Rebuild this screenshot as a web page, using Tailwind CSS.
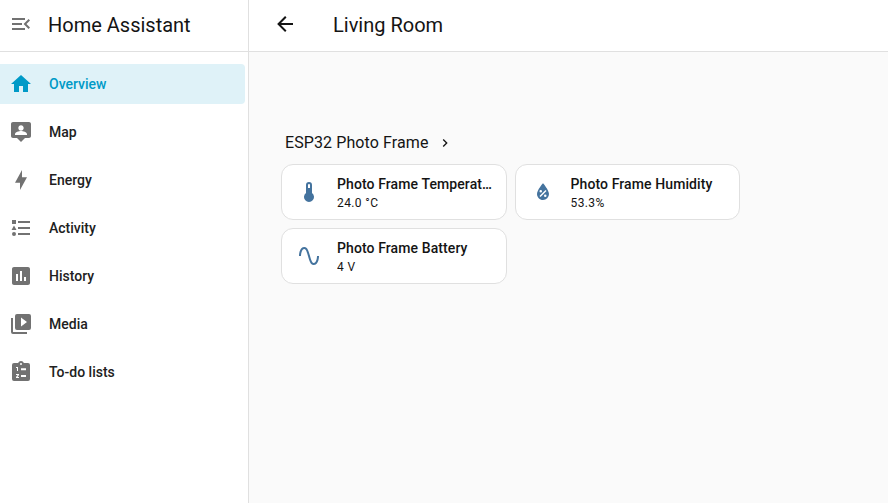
<!DOCTYPE html>
<html lang="en">

<head>
  <meta charset="UTF-8">
  <meta name="viewport" content="width=device-width, initial-scale=1.0">
  <script src="https://cdn.jsdelivr.net/npm/@tailwindcss/browser@4"></script>
  <title>Living Room</title>
</head>

<body class="font-['Roboto',sans-serif] bg-white text-[#141414]">
  <div class="flex h-[503px] w-[888px] overflow-hidden">

    <!-- Sidebar -->
    <aside class="w-[249px] shrink-0 border-r border-[#e0e0e0] bg-white">
      <div class="flex h-[52px] items-center border-b border-[#e0e0e0] pb-[3px]">
        <svg class="ml-[9px] h-6 w-6 fill-[#727272]" viewBox="0 0 24 24"><path d="M21,15.61L19.59,17L14.58,12L19.59,7L21,8.39L17.44,12L21,15.61M3,6H16V8H3V6M3,13V11H13V13H3M3,18V16H16V18H3Z" /></svg>
        <span class="ml-[15px] mt-0.5 text-xl">Home Assistant</span>
      </div>
      <nav class="flex flex-col pt-3 text-sm font-medium text-[#212121]">
        <a class="flex h-10 w-[245px] items-center rounded-r bg-[#dff2f8] text-[#009ac7]">
          <svg class="ml-[9px] h-6 w-6 fill-[#009ac7]" viewBox="0 0 24 24"><path d="M10,20V14H14V20H19V12H22L12,3L2,12H5V20H10Z" /></svg>
          <span class="ml-4">Overview</span>
        </a>
        <a class="mt-2 flex h-10 items-center">
          <svg class="ml-[9px] h-6 w-6 fill-[#727272]" viewBox="0 0 24 24"><path d="M20 2H4C2.9 2 2 2.9 2 4V16C2 17.1 2.9 18 4 18H8L12 22L16 18H20C21.1 18 22 17.1 22 16V4C22 2.9 21.1 2 20 2M12 5.3C13.5 5.3 14.7 6.5 14.7 8S13.5 10.7 12 10.7 9.3 9.5 9.3 8 10.5 5.3 12 5.3M18 15H6V14.1C6 12.1 10 11 12 11S18 12.1 18 14.1V15Z" /></svg>
          <span class="ml-4">Map</span>
        </a>
        <a class="mt-2 flex h-10 items-center">
          <svg class="ml-[9px] h-6 w-6 fill-[#727272]" viewBox="0 0 24 24"><path d="M11 14.8H6L13 2V9.2H18L11 22V14.8Z" /></svg>
          <span class="ml-4">Energy</span>
        </a>
        <a class="mt-2 flex h-10 items-center">
          <svg class="ml-[9px] h-6 w-6 fill-[#727272]" viewBox="0 0 24 24"><path d="M5,9.5L7.5,14H2.5L5,9.5M3,4H7V8H3V4M5,20A2,2 0 0,0 7,18A2,2 0 0,0 5,16A2,2 0 0,0 3,18A2,2 0 0,0 5,20M9,5V7H21V5H9M9,19H21V17H9V19M9,13H21V11H9V13Z" /></svg>
          <span class="ml-4">Activity</span>
        </a>
        <a class="mt-2 flex h-10 items-center">
          <svg class="ml-[9px] h-6 w-6 fill-[#727272]" viewBox="0 0 24 24"><path d="M19 3H5C3.9 3 3 3.9 3 5V19C3 20.1 3.9 21 5 21H19C20.1 21 21 20.1 21 19V5C21 3.9 20.1 3 19 3M9 17H7V10H9V17M13 17H11V7H13V17M17 17H15V13H17V17Z" /></svg>
          <span class="ml-4">History</span>
        </a>
        <a class="mt-2 flex h-10 items-center">
          <svg class="ml-[9px] h-6 w-6 fill-[#727272]" viewBox="0 0 24 24"><path d="M4,6H2V20A2,2 0 0,0 4,22H18V20H4V6M20,2H8A2,2 0 0,0 6,4V16A2,2 0 0,0 8,18H20A2,2 0 0,0 22,16V4A2,2 0 0,0 20,2M12,14.5V5.5L18,10L12,14.5Z" /></svg>
          <span class="ml-4">Media</span>
        </a>
        <a class="mt-2 flex h-10 items-center">
          <svg class="ml-[9px] h-6 w-6 fill-[#727272]" viewBox="0 0 24 24"><path fill-rule="evenodd" d="M19,3H14.82C14.4,1.84 13.3,1 12,1C10.7,1 9.6,1.84 9.18,3H5A2,2 0 0,0 3,5V19A2,2 0 0,0 5,21H19A2,2 0 0,0 21,19V5A2,2 0 0,0 19,3M12,3A1,1 0 0,1 13,4A1,1 0 0,1 12,5A1,1 0 0,1 11,4A1,1 0 0,1 12,3M7,7H9V11H8V8H7V7M7,14H10V15L8.5,17H10V18H7V17L8.7,15H7V14M12,8.3H17V10.3H12V8.3M12,15H17V17H12V15Z" /></svg>
          <span class="ml-4">To-do lists</span>
        </a>
      </nav>
    </aside>

    <!-- Main -->
    <main class="flex min-w-0 flex-1 flex-col bg-[#fafafa]">
      <header class="flex h-[52px] shrink-0 items-center border-b border-[#e0e0e0] bg-white pb-[3px]">
        <svg class="ml-6 h-6 w-6 fill-[#141414]" viewBox="0 0 24 24"><path d="M20,11V13H8L13.5,18.5L12.08,19.92L4.16,12L12.08,4.08L13.5,5.5L8,11H20Z" /></svg>
        <h1 class="ml-[36px] mt-0.5 text-xl font-normal">Living Room</h1>
      </header>

      <section class="w-[491px] pl-8 pt-[79px]">
        <div class="flex h-6 items-center pl-1">
          <span class="text-base tracking-[0.1px]">ESP32 Photo Frame</span>
          <svg class="ml-2 h-4 w-4 fill-[#141414]" viewBox="0 0 24 24"><path d="M8.59,16.58L13.17,12L8.59,7.41L10,6L16,12L10,18L8.59,16.58Z" /></svg>
        </div>
        <div class="mt-[9px] grid grid-cols-2 gap-2">
          <div class="flex h-14 min-w-0 items-center gap-4 rounded-xl border border-[#e0e0e0] bg-white pl-[15px] pr-3">
            <svg class="h-6 w-6 shrink-0 fill-[#44739e]" viewBox="0 0 24 24"><path d="M15 13V5A3 3 0 0 0 9 5V13A5 5 0 1 0 15 13M12 4A1 1 0 0 1 13 5V8H11V5A1 1 0 0 1 12 4Z" /></svg>
            <div class="min-w-0 pt-px">
              <div class="truncate text-sm font-medium leading-5 tracking-[0.1px]">Photo Frame Temperature</div>
              <div class="mt-px truncate text-xs leading-4 tracking-[0.4px]">24.0 °C</div>
            </div>
          </div>
          <div class="flex h-14 min-w-0 items-center gap-4 rounded-xl border border-[#e0e0e0] bg-white pl-[15px] pr-3">
            <svg class="h-6 w-6 shrink-0 fill-[#44739e]" viewBox="0 0 24 24"><path d="M12,3.25C12,3.25 6,10 6,14C6,17.32 8.69,20 12,20A6,6 0 0,0 18,14C18,10 12,3.25 12,3.25M14.47,9.97L15.53,11.03L9.53,17.03L8.47,15.97M9.75,10A1.25,1.25 0 0,1 11,11.25A1.25,1.25 0 0,1 9.75,12.5A1.25,1.25 0 0,1 8.5,11.25A1.25,1.25 0 0,1 9.75,10M14.25,14.5A1.25,1.25 0 0,1 15.5,15.75A1.25,1.25 0 0,1 14.25,17A1.25,1.25 0 0,1 13,15.75A1.25,1.25 0 0,1 14.25,14.5Z" /></svg>
            <div class="min-w-0 pt-px">
              <div class="truncate text-sm font-medium leading-5 tracking-[0.1px]">Photo Frame Humidity</div>
              <div class="mt-px truncate text-xs leading-4 tracking-[0.4px]">53.3%</div>
            </div>
          </div>
          <div class="flex h-14 min-w-0 items-center gap-4 rounded-xl border border-[#e0e0e0] bg-white pl-[15px] pr-3">
            <svg class="h-6 w-6 shrink-0 fill-[#44739e]" viewBox="0 0 24 24"><path d="M16.5,21C13.5,21 12.31,16.76 11.05,12.28C10.14,9.04 9,5 7.5,5C4.11,5 4,11.93 4,12H2C2,11.63 2.06,3 7.5,3C10.5,3 11.71,7.25 12.97,11.74C13.86,14.96 15,19 16.5,19C19.94,19 20.03,12.07 20.03,12H22.03C22.03,12.37 21.97,21 16.5,21Z" /></svg>
            <div class="min-w-0 pt-px">
              <div class="truncate text-sm font-medium leading-5 tracking-[0.1px]">Photo Frame Battery</div>
              <div class="mt-px truncate text-xs leading-4 tracking-[0.4px]">4 V</div>
            </div>
          </div>
        </div>
      </section>
    </main>

  </div>
</body>

</html>
